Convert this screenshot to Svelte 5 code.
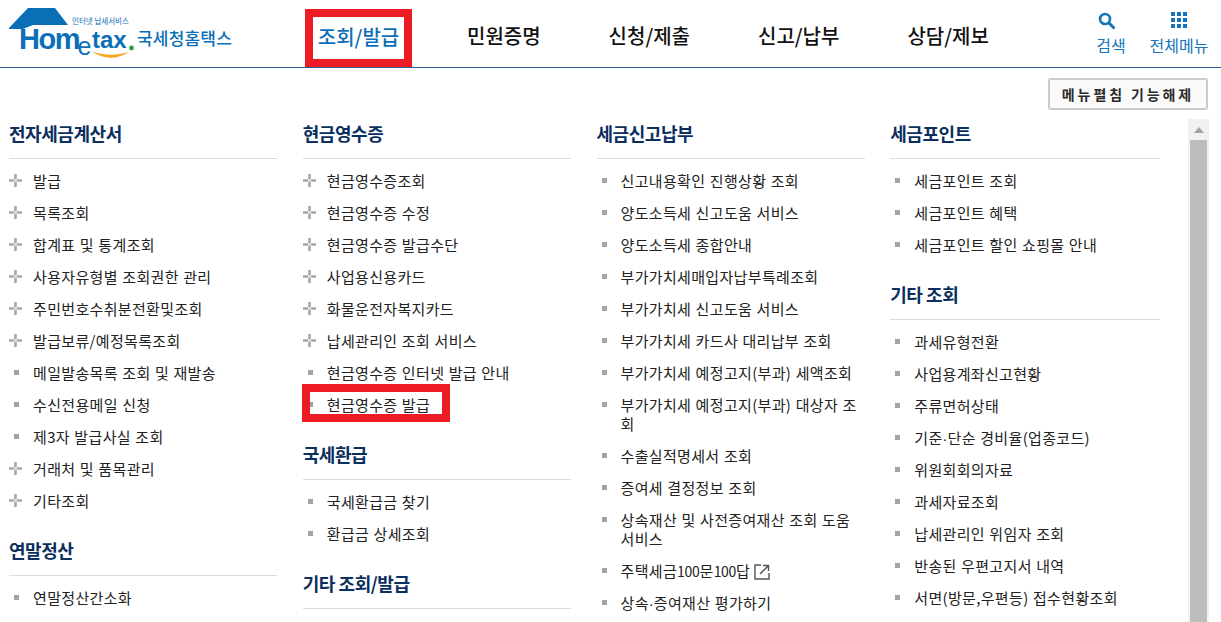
<script>
  const columns = [
    [
      { title: '전자세금계산서', items: [['발급', 1], ['목록조회', 1], ['합계표 및 통계조회', 1], ['사용자유형별 조회권한 관리', 1], ['주민번호수취분전환및조회', 1], ['발급보류/예정목록조회', 1], ['메일발송목록 조회 및 재발송'], ['수신전용메일 신청'], ['제3자 발급사실 조회'], ['거래처 및 품목관리', 1], ['기타조회', 1]] },
      { title: '연말정산', items: [['연말정산간소화']] }
    ],
    [
      { title: '현금영수증', items: [['현금영수증조회', 1], ['현금영수증 수정', 1], ['현금영수증 발급수단', 1], ['사업용신용카드', 1], ['화물운전자복지카드', 1], ['납세관리인 조회 서비스', 1], ['현금영수증 인터넷 발급 안내'], ['현금영수증 발급', 0, 'mark']] },
      { title: '국세환급', items: [['국세환급금 찾기'], ['환급금 상세조회']] },
      { title: '기타 조회/발급', items: [] }
    ],
    [
      { title: '세금신고납부', items: [['신고내용확인 진행상황 조회'], ['양도소득세 신고도움 서비스'], ['양도소득세 종합안내'], ['부가가치세매입자납부특례조회'], ['부가가치세 신고도움 서비스'], ['부가가치세 카드사 대리납부 조회'], ['부가가치세 예정고지(부과) 세액조회'], ['부가가치세 예정고지(부과) 대상자 조회'], ['수출실적명세서 조회'], ['증여세 결정정보 조회'], ['상속재산 및 사전증여재산 조회 도움 서비스'], ['', 0, 'ext'], ['상속·증여재산 평가하기']] }
    ],
    [
      { title: '세금포인트', items: [['세금포인트 조회'], ['세금포인트 혜택'], ['세금포인트 할인 쇼핑몰 안내']] },
      { title: '기타 조회', items: [['과세유형전환'], ['사업용계좌신고현황'], ['주류면허상태'], ['기준·단순 경비율(업종코드)'], ['위원회회의자료'], ['과세자료조회'], ['납세관리인 위임자 조회'], ['반송된 우편고지서 내역'], ['서면(방문,우편등) 접수현황조회']] }
    ]
  ];
  const nav = ['민원증명', '신청/제출', '신고/납부', '상담/제보'];
</script>

<div class="page">
  <header class="top">
    <svg class="logo" width="232" height="62" viewBox="0 0 232 62" aria-hidden="true">
      <path d="M28 8 H55 L68 25 H33 L23 29 H9 V28 Z" fill="#0b6fb8" />
      <text x="72" y="24" class="tiny">인터넷 납세서비스</text>
      <text x="19" y="49" class="home">Hom</text>
      <text x="77.5" y="55" class="e">e</text>
      <text x="92" y="48" class="tax">tax</text>
      <circle cx="131.5" cy="48" r="2.4" fill="#2e9e44" />
      <path d="M91 51 Q110 64 129 52 Q110 58 91 51 Z" fill="#f5a623" />
      <text x="137" y="45" class="kr">국세청홈택스</text>
    </svg>
    <nav class="nav">
      <a class="active">조회/발급</a>
      {#each nav as n}<a>{n}</a>{/each}
    </nav>
    <div class="tools">
      <div class="tool search">
        <svg width="18" height="18" viewBox="0 0 18 18" aria-hidden="true">
          <circle cx="7" cy="7" r="5" fill="none" stroke="#1574bb" stroke-width="2.6" />
          <path d="M10.5 10.5 L16.5 16.5" stroke="#1574bb" stroke-width="3" />
        </svg>
        <span>검색</span>
      </div>
      <div class="tool all">
        <svg width="16" height="18" viewBox="0 0 16 18" aria-hidden="true">
          {#each [0, 6, 12] as y}
            {#each [0, 6, 12] as x}<rect {x} {y} width="4" height="4" fill="#1574bb" />{/each}
          {/each}
        </svg>
        <span>전체메뉴</span>
      </div>
    </div>
  </header>

  <div class="bar"><button>메뉴펼침 기능해제</button></div>

  <div class="main">
    <div class="cols">
      {#each columns as col}
        <div class="col">
          {#each col as sec}
            <section>
              <h3>{sec.title}</h3>
              <ul>
                {#each sec.items as [label, plus, kind]}
                  <li>
                    {#if plus}
                      <svg class="ic" width="13" height="13" viewBox="0 0 13 13" aria-hidden="true">
                        <path d="M6.5 0v5M6.5 8v5M0 6.5h5M8 6.5h5" stroke="#a6a6a6" stroke-width="2.6" />
                        <path d="M5 6.5h3M6.5 5v3" stroke="#dcdcdc" stroke-width="2.6" />
                      </svg>
                    {:else}
                      <i class="sq"></i>
                    {/if}
                    {#if kind === 'ext'}
                      주택세금<span class="num">100</span>문<span class="num">100</span>답<svg class="ext" width="16" height="16" viewBox="0 0 16 16" aria-hidden="true">
                        <path d="M7 1H1V15H15V9" fill="none" stroke="#555" stroke-width="1.4" />
                        <path d="M6 10L14 2M9 1.5H14.5V7" fill="none" stroke="#555" stroke-width="1.5" />
                      </svg>
                    {:else}
                      {#each label.split('·') as part, i}{#if i}<span class="dot">·</span>{/if}{part}{/each}
                    {/if}
                    {#if kind === 'mark'}<b class="mark"></b>{/if}
                  </li>
                {/each}
              </ul>
            </section>
          {/each}
        </div>
      {/each}
    </div>
    <div class="scroll">
      <div class="arrow"></div>
      <div class="thumb"></div>
    </div>
  </div>
</div>

<style>
  :global(body) { margin: 0; background: #fff; overflow: hidden; }
  .page { width: 1221px; height: 622px; overflow: hidden; font-family: "Noto Sans CJK KR", "Noto Sans", sans-serif; color: #222; font-size: 15px; letter-spacing: .34px; word-spacing: .7px; }
  .top { height: 67px; border-bottom: 1px solid #2b5f94; display: flex; position: relative; letter-spacing: normal; word-spacing: normal; }
  .logo { flex: none; margin-right: 73px; }
  .logo text { font-family: "Liberation Sans", "Noto Sans CJK KR", sans-serif; }
  .tiny { font-size: 7.5px; fill: #0b6fb8; font-family: "Noto Sans CJK KR", sans-serif !important; }
  .home { font-size: 29px; font-weight: 700; fill: #0b6fb8; letter-spacing: -1.5px; }
  .e { font-size: 25px; fill: #0b6fb8; }
  .tax { font-size: 24px; font-weight: 700; fill: #0b6fb8; letter-spacing: 0; }
  .kr { font-size: 17px; font-weight: 500; fill: #0b6fb8; font-family: "Noto Sans CJK KR", sans-serif !important; letter-spacing: .2px; }
  .nav { display: flex; align-items: flex-end; height: 67px; }
  .nav a { font-size: 20px; font-weight: 500; color: #111; height: 58px; line-height: 54px; margin-right: 68px; white-space: nowrap; }
  .nav a.active { box-sizing: border-box; width: 107px; border: 8px solid #ed1c24; color: #0d6fb8; line-height: 40px; text-align: center; margin-right: 55px; }
  .tools { position: absolute; right: 0; top: 0; display: flex; }
  .tool { display: flex; flex-direction: column; align-items: center; color: #1574bb; font-size: 16px; padding-top: 12px; }
  .tool svg { margin-bottom: 2px; }
  .tool span { line-height: 26px; white-space: nowrap; }
  .search { width: 30px; margin-right: 23px; }
  .search svg { margin-right: 8px; }
  .all { width: 60px; margin-right: 12px; }
  .bar { height: 51px; display: flex; justify-content: flex-end; padding: 10px 13px 0 0; box-sizing: border-box; }
  .bar button { width: 160px; height: 32px; font: 700 14px "Noto Sans CJK KR", sans-serif; letter-spacing: 2.9px; color: #2a2a2a; background: #fafafa; border: 2px solid #ccc; border-radius: 3px; padding: 0; }
  .main { display: flex; height: 503px; padding-left: 9px; overflow: hidden; }
  .cols { display: flex; gap: 25.75px; width: 1179px; flex: none; }
  .col { width: 268px; flex: none; }
  .col:last-child { width: 270px; }
  h3 { margin: 0 0 12px; height: 39px; border-bottom: 1px solid #ddd; font-size: 18px; font-weight: 700; color: #0b2f5e; line-height: 29px; letter-spacing: -.45px; word-spacing: 0; }
  ul { list-style: none; margin: 0 0 13px; padding: 0; }
  li { position: relative; padding: 0 0 13px 24px; line-height: 19px; }
  .ic { position: absolute; left: 0; top: 3px; }
  .sq { position: absolute; left: 5px; top: 7px; width: 5px; height: 5px; background: #a3a3a3; }
  .num { font-size: 14px; letter-spacing: -.3px; line-height: 1; }
  .dot { font-family: "Liberation Sans", sans-serif; letter-spacing: 0; line-height: 1; }
  .ext { vertical-align: -3px; margin-left: 4px; }
  .mark { position: absolute; left: -1px; top: -11px; width: 132px; height: 22px; border: 8px solid #ed1c24; pointer-events: none; }
  .scroll { position: absolute; left: 1188px; top: 119px; width: 21px; height: 503px; background: #f1f1f1; }
  .arrow { margin: 8px auto 0; width: 0; height: 0; border: 5px solid transparent; border-top: 0; border-bottom: 6px solid #a3a3a3; }
  .thumb { margin: 7px 2px 0; height: 482px; background: #bdbdbd; }
</style>
